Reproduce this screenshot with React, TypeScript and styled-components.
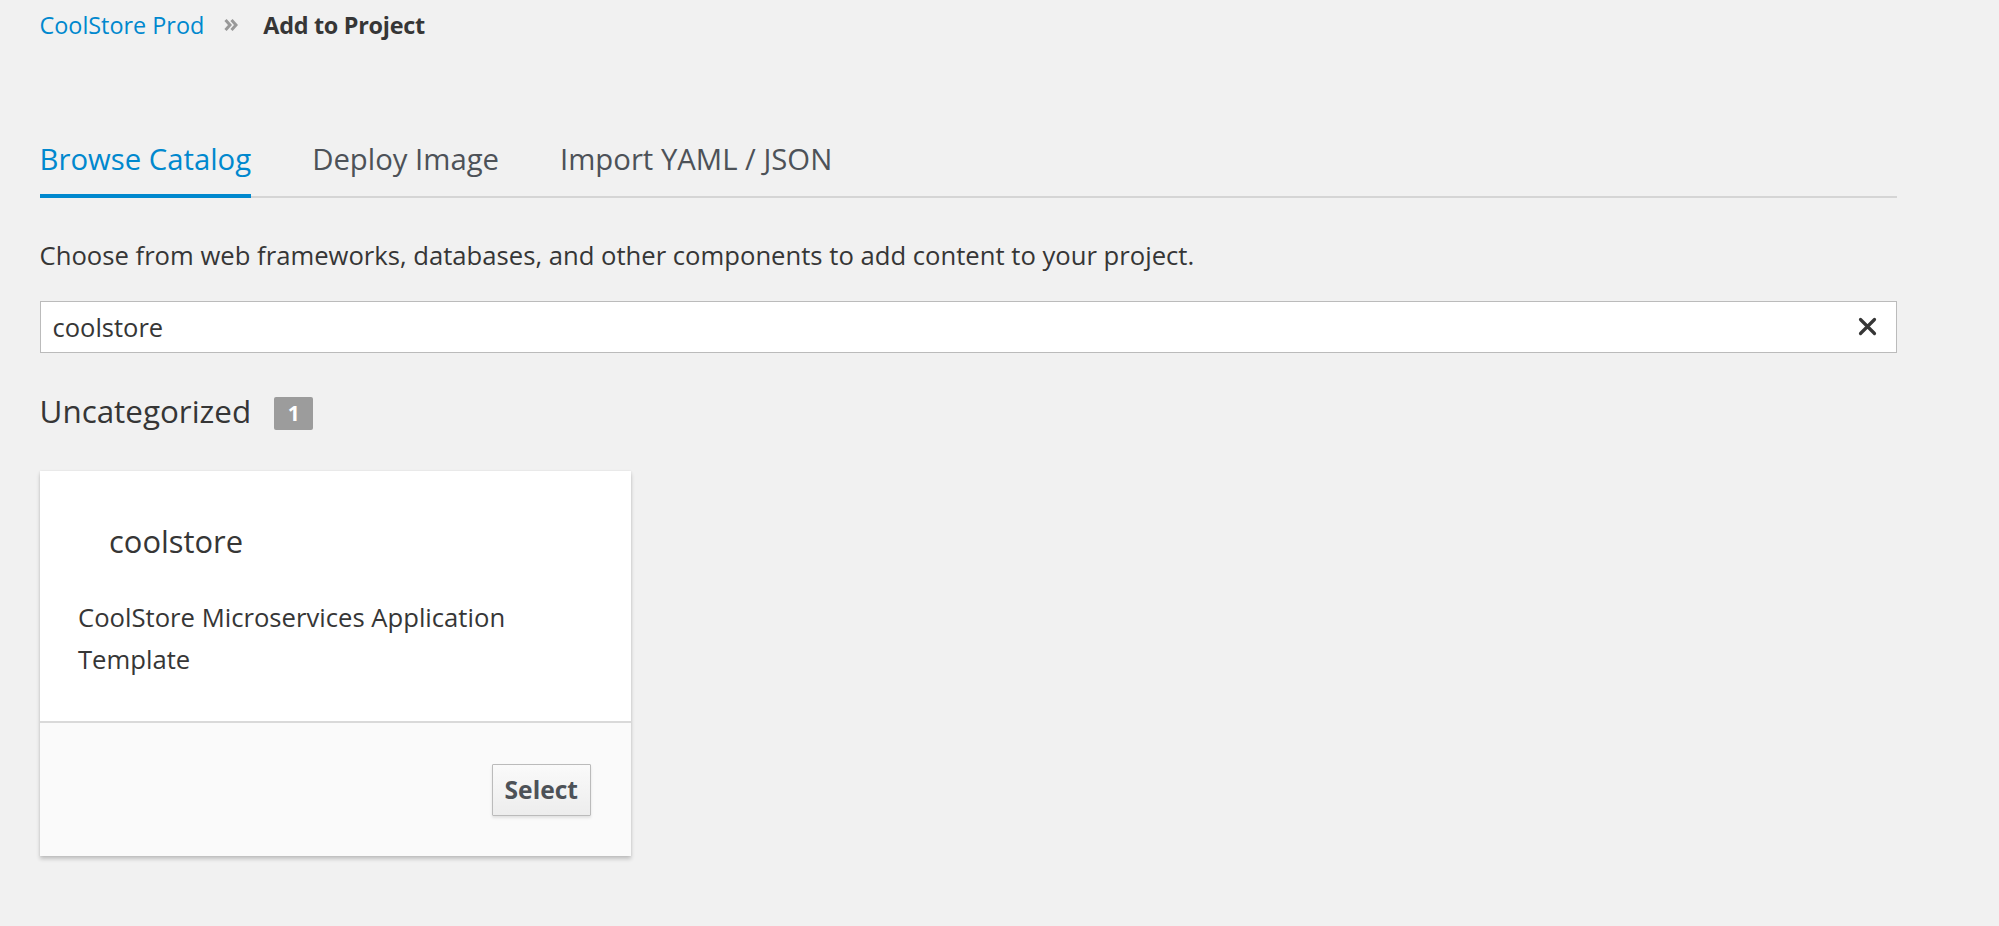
import React from "react";
import styled, { createGlobalStyle } from "styled-components";

const Global = createGlobalStyle`
  html, body {
    margin: 0;
    padding: 0;
    background: #f1f1f1;
    min-height: 100%;
  }
  body {
    font-family: "Open Sans", "Liberation Sans", sans-serif;
    color: #363636;
  }
  * { box-sizing: border-box; }
`;

const Page = styled.div`
  padding: 9px 102px 40px 39.5px;
  min-height: 926px;
  background: #f1f1f1;
`;

const Breadcrumb = styled.nav`
  display: flex;
  align-items: center;
  font-size: 23.4px;
  line-height: 32px;
  height: 32px;
`;

const CrumbLink = styled.a`
  color: #0088ce;
  text-decoration: none;
`;

const CrumbSep = styled.span`
  display: inline-flex;
  align-items: center;
  margin: 0 25px 0 20px;
  width: 14px;
  height: 14px;
`;

const CrumbCurrent = styled.span`
  font-weight: 700;
  letter-spacing: -0.28px;
  color: #363636;
`;

const TabBar = styled.div`
  display: flex;
  gap: 61px;
  margin-top: 99.4px;
  border-bottom: 2px solid #d5d5d5;
`;

const Tab = styled.a<{ $active?: boolean }>`
  font-size: 29.3px;
  line-height: 39.9px;
  padding-bottom: 13.7px;
  margin-bottom: -2px;
  color: ${(p) => (p.$active ? "#0088ce" : "#4d5258")};
  border-bottom: 4px solid ${(p) => (p.$active ? "#0088ce" : "transparent")};
  text-decoration: none;
  cursor: pointer;
`;

const Intro = styled.p`
  margin: 36.8px 0 0;
  font-size: 25.65px;
  line-height: 42.5px;
  color: #363636;
`;

const SearchBox = styled.div`
  margin-top: 23.7px;
  height: 52px;
  display: flex;
  align-items: center;
  background: #fff;
  border: 1px solid #bbb;
`;

const SearchInput = styled.input`
  flex: 1;
  height: 100%;
  border: 0;
  outline: none;
  background: transparent;
  padding: 0 12px;
  font-family: "Open Sans", "Liberation Sans", sans-serif;
  font-size: 25.5px;
  color: #363636;
`;

const ClearButton = styled.button`
  border: 0;
  background: transparent;
  padding: 0;
  margin-right: 19px;
  width: 20px;
  height: 20px;
  display: flex;
  align-items: center;
  justify-content: center;
  cursor: pointer;
`;

const SectionHeading = styled.h2`
  margin: 37.7px 0 0;
  display: flex;
  align-items: flex-start;
  gap: 23px;
  font-weight: 400;
  font-size: 31.4px;
  line-height: 40px;
  color: #363636;
`;

const Badge = styled.span`
  margin-top: 6px;
  min-width: 39px;
  height: 33px;
  padding: 0 10px;
  display: inline-flex;
  align-items: center;
  justify-content: center;
  background: #9c9c9c;
  color: #fff;
  border-radius: 2px;
  font-size: 21px;
  font-weight: 700;
  line-height: 1;
`;

const Card = styled.div`
  margin-top: 40.3px;
  width: 591.5px;
  background: #fff;
  box-shadow: 0 3px 4px rgba(0, 0, 0, 0.2), 0 0 2px rgba(0, 0, 0, 0.08);
`;

const CardBody = styled.div`
  padding: 49.3px 38.5px 39px;
`;

const CardTitle = styled.h3`
  margin: 0;
  padding-left: 31px;
  font-weight: 400;
  font-size: 30.9px;
  line-height: 42px;
  color: #363636;
`;

const CardDesc = styled.p`
  margin: 34.5px 0 0;
  font-size: 25.65px;
  line-height: 42.5px;
  color: #363636;
`;

const CardFooter = styled.div`
  border-top: 2px solid #d9d9d9;
  background: #fafafa;
  padding: 41px 40px 40px;
  display: flex;
  justify-content: flex-end;
`;

const SelectButton = styled.button`
  height: 52px;
  padding: 0 12px;
  border: 1px solid #bbb;
  border-radius: 1px;
  background: linear-gradient(to bottom, #fafafa 0%, #ededed 100%);
  box-shadow: 0 2px 3px rgba(0, 0, 0, 0.1);
  font-family: "Open Sans", "Liberation Sans", sans-serif;
  font-size: 24.6px;
  font-weight: 700;
  color: #4d5258;
  cursor: pointer;
`;

const DoubleChevron = () => (
  <svg width="14" height="14" viewBox="0 0 14 14" fill="none">
    <path d="M1.5 2 L6 7 L1.5 12" stroke="#999" strokeWidth="3" />
    <path d="M7.5 2 L12 7 L7.5 12" stroke="#999" strokeWidth="3" />
  </svg>
);

const CloseIcon = () => (
  <svg width="19" height="19" viewBox="0 0 19 19">
    <path
      d="M2.5 2.5 L16.5 16.5 M16.5 2.5 L2.5 16.5"
      stroke="#363636"
      strokeWidth="3.2"
      strokeLinecap="round"
    />
  </svg>
);

export default function App() {
  const tabs = ["Browse Catalog", "Deploy Image", "Import YAML / JSON"];
  return (
    <>
      <Global />
      <Page>
        <Breadcrumb>
          <CrumbLink href="#">CoolStore Prod</CrumbLink>
          <CrumbSep>
            <DoubleChevron />
          </CrumbSep>
          <CrumbCurrent>Add to Project</CrumbCurrent>
        </Breadcrumb>

        <TabBar>
          {tabs.map((t, i) => (
            <Tab key={t} $active={i === 0}>
              {t}
            </Tab>
          ))}
        </TabBar>

        <Intro>
          Choose from web frameworks, databases, and other components to add
          content to your project.
        </Intro>

        <SearchBox>
          <SearchInput defaultValue="coolstore" />
          <ClearButton aria-label="Clear">
            <CloseIcon />
          </ClearButton>
        </SearchBox>

        <SectionHeading>
          Uncategorized
          <Badge>1</Badge>
        </SectionHeading>

        <Card>
          <CardBody>
            <CardTitle>coolstore</CardTitle>
            <CardDesc>
              CoolStore Microservices Application
              <br />
              Template
            </CardDesc>
          </CardBody>
          <CardFooter>
            <SelectButton>Select</SelectButton>
          </CardFooter>
        </Card>
      </Page>
    </>
  );
}
